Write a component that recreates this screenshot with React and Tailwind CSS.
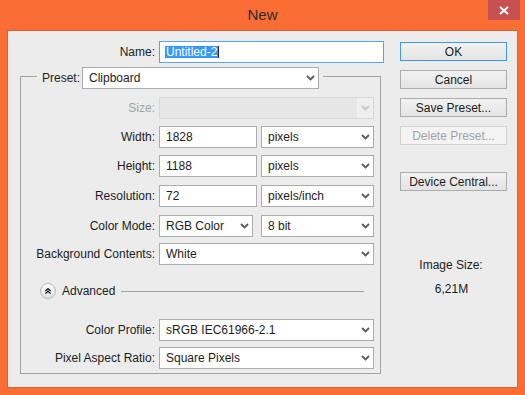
import React from "react";

const Chevron = ({ disabled }) => (
  <svg width="9" height="6" viewBox="0 0 9 6" className="shrink-0">
    <polyline
      points="1,1 4.5,4.5 8,1"
      fill="none"
      stroke={disabled ? "#c6c6c6" : "#5c5c5c"}
      strokeWidth="1.9"
    />
  </svg>
);

function Select({ value, className }) {
  return (
    <div
      className={`flex items-center h-[22px] border border-[#acacac] bg-white ${className}`}
    >
      <span className="flex-1 pl-[6px] whitespace-nowrap overflow-hidden">{value}</span>
      <span className="w-[16px] flex justify-center">
        <Chevron />
      </span>
    </div>
  );
}

function Input({ value, className }) {
  return (
    <div
      className={`flex items-center h-[22px] border border-[#abadb3] bg-white pl-[6px] ${className}`}
    >
      {value}
    </div>
  );
}

function Row({ label, children, className = "", disabled }) {
  return (
    <div className={`flex items-center h-[22px] ${className}`}>
      <div
        className={`w-[134px] text-right whitespace-nowrap ${
          disabled ? "text-[#a3a3a3]" : ""
        }`}
      >
        {label}
      </div>
      <div className="ml-[4px] flex items-center w-[215px] justify-between">
        {children}
      </div>
    </div>
  );
}

function Button({ children, primary, disabled, className = "" }) {
  return (
    <div
      className={`w-[107px] h-[19px] flex items-center justify-center border bg-gradient-to-b from-[#f2f2f2] to-[#e4e4e4] ${
        primary ? "border-[#3c9be8]" : disabled ? "border-[#d2d2d2] from-[#f4f4f4] to-[#f4f4f4] text-[#a3a3a3]" : "border-[#acacac]"
      } ${className}`}
    >
      {children}
    </div>
  );
}

export default function App() {
  return (
    <div className="w-[525px] h-[395px] bg-[#fa6d35] flex flex-col font-['Liberation_Sans',Arial,sans-serif] text-[12px] text-[#1c1c1c] overflow-hidden">
      {/* Title bar */}
      <div className="relative h-[30px] flex items-center justify-center">
        <span className="text-[15px] text-[#2e2e2e] mt-[1px]">New</span>
        <div className="absolute right-[5px] top-0 w-[32px] h-[20px] bg-[#c75050] flex items-center justify-center">
          <svg width="10" height="9" viewBox="0 0 10 9">
            <path d="M1 1 L9 8 M9 1 L1 8" stroke="#ffffff" strokeWidth="2" />
          </svg>
        </div>
      </div>

      {/* Client area */}
      <div className="mx-[7px] h-[358px] border border-[#dd622f] bg-[#ececec] flex">
        {/* Left column */}
        <div className="w-[376px] flex flex-col">
          <div className="flex items-center h-[22px] mt-[10px]">
            <div className="w-[147px] text-right">Name:</div>
            <div className="ml-[4px] w-[225px] h-[22px] border border-[#5ea2e6] bg-white flex items-center pl-[5px]">
              <span className="bg-[#3399ff] text-white leading-[12px] h-[12px] px-[1px] inline-flex items-center border-r border-[#222]">
                Untitled-2
              </span>
            </div>
          </div>

          {/* Preset group */}
          <div className="ml-[12px] w-[361px] mt-[4px] flex flex-col">
            <div className="flex h-[22px]">
              <div className="w-[17px] mt-[9px] border-l border-t border-[#a3a3a3]" />
              <div className="flex items-center pl-[5px] pr-[4px]">
                <span className="w-[40px]">Preset:</span>
                <Select value="Clipboard" className="w-[237px]" />
              </div>
              <div className="flex-1 mt-[9px] border-r border-t border-[#a3a3a3]" />
            </div>
            <div className="border-l border-r border-b border-[#a3a3a3] pt-[8px] pb-[4px] flex flex-col">
              <Row label="Size:" disabled>
                <div className="w-[215px] h-[22px] border border-[#d9d9d9] bg-[#efefef] flex items-center">
                  <div className="flex-1 h-[20px] bg-[#e6e6e6]" />
                  <span className="w-[16px] flex justify-center">
                    <Chevron disabled />
                  </span>
                </div>
              </Row>
              <Row label="Width:" className="mt-[7px]">
                <Input value="1828" className="w-[98px]" />
                <Select value="pixels" className="w-[113px]" />
              </Row>
              <Row label="Height:" className="mt-[7px]">
                <Input value="1188" className="w-[98px]" />
                <Select value="pixels" className="w-[113px]" />
              </Row>
              <Row label="Resolution:" className="mt-[8px]">
                <Input value="72" className="w-[98px]" />
                <Select value="pixels/inch" className="w-[113px]" />
              </Row>
              <Row label="Color Mode:" className="mt-[8px]">
                <Select value="RGB Color" className="w-[94px]" />
                <Select value="8 bit" className="w-[113px]" />
              </Row>
              <Row label="Background Contents:" className="mt-[6px]">
                <Select value="White" className="w-[215px]" />
              </Row>

              <div className="flex items-center h-[22px] mt-[15px]">
                <div className="ml-[19px] w-[16px] h-[16px] rounded-full border border-[#b8b8b8] bg-gradient-to-b from-[#ffffff] to-[#e3e3e3] flex items-center justify-center">
                  <svg width="16" height="16" viewBox="0 0 16 16">
                    <polyline points="5,8 8,5.2 11,8" fill="none" stroke="#1a1a1a" strokeWidth="1.5" />
                    <polyline points="5,11 8,8.2 11,11" fill="none" stroke="#1a1a1a" strokeWidth="1.5" />
                  </svg>
                </div>
                <span className="ml-[6px]">Advanced</span>
                <div className="flex-1 ml-[6px] mr-[16px] border-t border-[#a3a3a3]" />
              </div>

              <Row label="Color Profile:" className="mt-[17px]">
                <Select value="sRGB IEC61966-2.1" className="w-[215px]" />
              </Row>
              <Row label="Pixel Aspect Ratio:" className="mt-[6px]">
                <Select value="Square Pixels" className="w-[215px]" />
              </Row>
            </div>
          </div>
        </div>

        {/* Right column */}
        <div className="ml-[16px] w-[107px] flex flex-col">
          <Button primary className="mt-[11px]">OK</Button>
          <Button className="mt-[9px]">Cancel</Button>
          <Button className="mt-[9px]">Save Preset...</Button>
          <Button disabled className="mt-[9px]">Delete Preset...</Button>
          <Button className="mt-[27px]">Device Central...</Button>
          <div className="mt-[66px] h-[16px] flex items-center justify-center pr-[5px]">
            Image Size:
          </div>
          <div className="mt-[8px] h-[16px] flex items-center justify-center pr-[4px]">
            6,21M
          </div>
        </div>
      </div>
    </div>
  );
}
